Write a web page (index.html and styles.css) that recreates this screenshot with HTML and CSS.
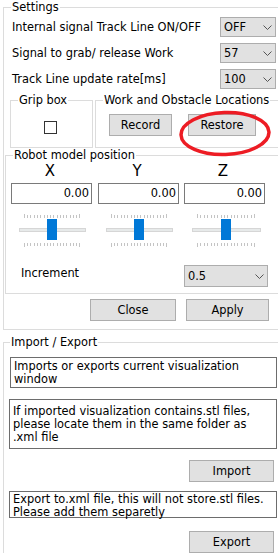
FILE: index.html
```html
<!DOCTYPE html>
<html lang="en">
<head>
    <meta charset="UTF-8">
    <title>Settings</title>
    <link rel="stylesheet" href="styles.css">
</head>
<body>
    <fieldset class="group settings">
        <legend>Settings</legend>
        <div class="setting-row">
            <span>Internal signal Track Line ON/OFF</span>
            <div class="combo combo-small">OFF<svg class="chevron" width="9" height="5" viewBox="0 0 9 5"><path d="M0.5 0.5 L4.5 4.5 L8.5 0.5" fill="none" stroke="#555" stroke-width="1"/></svg></div>
        </div>
        <div class="setting-row">
            <span>Signal to grab/ release Work</span>
            <div class="combo combo-small">57<svg class="chevron" width="9" height="5" viewBox="0 0 9 5"><path d="M0.5 0.5 L4.5 4.5 L8.5 0.5" fill="none" stroke="#555" stroke-width="1"/></svg></div>
        </div>
        <div class="setting-row">
            <span>Track Line update rate[ms]</span>
            <div class="combo combo-small">100<svg class="chevron" width="9" height="5" viewBox="0 0 9 5"><path d="M0.5 0.5 L4.5 4.5 L8.5 0.5" fill="none" stroke="#555" stroke-width="1"/></svg></div>
        </div>

        <div class="group-row">
            <fieldset class="group grip">
                <legend>Grip box</legend>
                <div class="checkbox"></div>
            </fieldset>
            <fieldset class="group locations">
                <legend>Work and Obstacle Locations</legend>
                <div class="location-buttons">
                    <button class="btn btn-record">Record</button>
                    <button class="btn btn-restore">Restore</button>
                </div>
                <!-- red marker drawn over the restore button -->
                <svg class="highlight" width="96" height="50" viewBox="0 0 96 50">
                    <ellipse cx="47" cy="24.5" rx="44" ry="21" fill="none" stroke="#ed1c24" stroke-width="3.5" transform="rotate(-2 47 24.5)"/>
                </svg>
            </fieldset>
        </div>

        <fieldset class="group robot">
            <legend>Robot model position</legend>
            <div class="axes">
                <div class="axis">
                    <div class="axis-name">X</div>
                    <div class="num-box">0.00</div>
                    <svg class="slider" width="81" height="33" viewBox="0 0 81 33">
                        <path d="M13.5 0v4M68.5 0v4M13.5 29v4M68.5 29v4" stroke="#c4c4c4"/>
                        <path d="M16.5 1v3M19.5 1v3M23.5 1v3M26.5 1v3M29.5 1v3M33.5 1v3M36.5 1v3M39.5 1v3M42.5 1v3M46.5 1v3M49.5 1v3M52.5 1v3M55.5 1v3M59.5 1v3M62.5 1v3M65.5 1v3M16.5 29v3M19.5 29v3M23.5 29v3M26.5 29v3M29.5 29v3M33.5 29v3M36.5 29v3M39.5 29v3M42.5 29v3M46.5 29v3M49.5 29v3M52.5 29v3M55.5 29v3M59.5 29v3M62.5 29v3M65.5 29v3" stroke="#c4c4c4"/>
                        <rect x="8.5" y="14.5" width="66" height="3" fill="#e7eaea" stroke="#d6d6d6"/>
                        <rect x="36" y="5" width="10" height="21" fill="#0078d7"/>
                    </svg>
                </div>
                <div class="axis">
                    <div class="axis-name">Y</div>
                    <div class="num-box">0.00</div>
                    <svg class="slider" width="81" height="33" viewBox="0 0 81 33">
                        <path d="M13.5 0v4M68.5 0v4M13.5 29v4M68.5 29v4" stroke="#c4c4c4"/>
                        <path d="M16.5 1v3M19.5 1v3M23.5 1v3M26.5 1v3M29.5 1v3M33.5 1v3M36.5 1v3M39.5 1v3M42.5 1v3M46.5 1v3M49.5 1v3M52.5 1v3M55.5 1v3M59.5 1v3M62.5 1v3M65.5 1v3M16.5 29v3M19.5 29v3M23.5 29v3M26.5 29v3M29.5 29v3M33.5 29v3M36.5 29v3M39.5 29v3M42.5 29v3M46.5 29v3M49.5 29v3M52.5 29v3M55.5 29v3M59.5 29v3M62.5 29v3M65.5 29v3" stroke="#c4c4c4"/>
                        <rect x="8.5" y="14.5" width="66" height="3" fill="#e7eaea" stroke="#d6d6d6"/>
                        <rect x="36" y="5" width="10" height="21" fill="#0078d7"/>
                    </svg>
                </div>
                <div class="axis">
                    <div class="axis-name">Z</div>
                    <div class="num-box">0.00</div>
                    <svg class="slider" width="81" height="33" viewBox="0 0 81 33">
                        <path d="M13.5 0v4M70.5 0v4M13.5 29v4M70.5 29v4" stroke="#c4c4c4"/>
                        <path d="M16.5 1v3M20.5 1v3M23.5 1v3M27.5 1v3M30.5 1v3M33.5 1v3M37.5 1v3M40.5 1v3M43.5 1v3M47.5 1v3M50.5 1v3M53.5 1v3M57.5 1v3M60.5 1v3M63.5 1v3M67.5 1v3M16.5 29v3M20.5 29v3M23.5 29v3M27.5 29v3M30.5 29v3M33.5 29v3M37.5 29v3M40.5 29v3M43.5 29v3M47.5 29v3M50.5 29v3M53.5 29v3M57.5 29v3M60.5 29v3M63.5 29v3M67.5 29v3" stroke="#c4c4c4"/>
                        <rect x="8.5" y="14.5" width="68" height="3" fill="#e7eaea" stroke="#d6d6d6"/>
                        <rect x="37" y="5" width="10" height="21" fill="#0078d7"/>
                    </svg>
                </div>
            </div>
            <div class="increment-row">
                <span>Increment</span>
                <div class="combo combo-wide">0.5<svg class="chevron" width="9" height="5" viewBox="0 0 9 5"><path d="M0.5 0.5 L4.5 4.5 L8.5 0.5" fill="none" stroke="#555" stroke-width="1"/></svg></div>
            </div>
        </fieldset>

        <div class="dialog-buttons">
            <button class="btn btn-close">Close</button>
            <button class="btn btn-apply">Apply</button>
        </div>
    </fieldset>

    <fieldset class="group import">
        <legend>Import / Export</legend>
        <div class="info info-1">Imports or exports current visualization window</div>
        <div class="info info-2">If imported visualization contains.stl files, please locate them in the same folder as .xml file</div>
        <button class="btn btn-side">Import</button>
        <div class="info info-3">Export to.xml file, this will not store.stl files. Please add them separetly</div>
        <button class="btn btn-side btn-export">Export</button>
    </fieldset>
</body>
</html>
```

FILE: styles.css
```css
body {
    margin: 0;
    width: 278px;
    height: 557px;
    overflow: hidden;
    background-color: #fff;
    font-family: "DejaVu Sans", sans-serif;
    font-size: 11.4px;
    color: #000;
}

.group {
    box-sizing: border-box;
    margin: 0;
    padding: 0;
    border: 1px solid #dcdcdc;
    min-width: 0;
}

.group legend {
    margin-left: 7px;
    padding: 0 1px;
    height: 14px;
    line-height: 14px;
    white-space: nowrap;
}

/* the right side of the outer boxes is cut off by the window */
.settings {
    margin-left: 3px;
    width: 275px;
    border-right: none;
    padding-bottom: 8px;
}

.setting-row {
    display: flex;
    align-items: center;
    justify-content: space-between;
    width: 264px;
    height: 20px;
    margin: 6px 0 0 8px;
}

.setting-row:first-of-type {
    margin-top: 3px;
}

.combo {
    box-sizing: border-box;
    display: flex;
    align-items: center;
    justify-content: space-between;
    background-color: #e1e1e1;
    border: 1px solid #adadad;
    padding: 0 3px 0 3px;
}

.combo-small {
    width: 56px;
    height: 20px;
}

.combo-wide {
    width: 84px;
    height: 22px;
}

.chevron {
    display: block;
}

.group-row {
    display: flex;
    margin: 4px 0 0 6px;
}

.grip {
    width: 83px;
}

.checkbox {
    box-sizing: border-box;
    width: 13px;
    height: 13px;
    border: 1px solid #333;
    margin: 14px 0 0 33px;
}

.locations {
    position: relative;
    flex: 1;
    margin-left: 2px;
    border-right: none;
    padding-bottom: 11px;
}

.location-buttons {
    display: flex;
    margin: 7px 0 0 13px;
}

.btn {
    box-sizing: border-box;
    height: 22px;
    padding: 0;
    background-color: #e1e1e1;
    border: 1px solid #adadad;
    font-family: inherit;
    font-size: 11.4px;
    color: #000;
}

.btn-record {
    width: 63px;
}

.btn-restore {
    width: 68px;
    margin-left: 16px;
}

.highlight {
    position: absolute;
    left: 82px;
    top: 2px;
}

.robot {
    margin-left: 1px;
    border-right: none;
    padding-bottom: 6px;
}

.axes {
    display: flex;
    gap: 6px;
    margin-left: 5px;
}

.axis {
    width: 81px;
}

.axis:last-child {
    margin-left: -1px;
}

.axis-name {
    height: 19px;
    line-height: 19px;
    font-size: 15px;
    text-align: center;
    padding-right: 3px;
}

.num-box {
    box-sizing: border-box;
    height: 21px;
    margin-top: 2px;
    border: 1px solid #7a7a7a;
    padding: 0 2px;
    line-height: 19px;
    text-align: right;
}

.slider {
    display: block;
    margin-top: 10px;
}

.increment-row {
    display: flex;
    align-items: flex-start;
    justify-content: space-between;
    width: 247px;
    margin: 18px 0 0 15px;
}

.increment-row span {
    margin-top: 1px;
}

.dialog-buttons {
    display: flex;
    margin: 5px 0 0 86px;
}

.btn-close {
    width: 86px;
}

.btn-apply {
    width: 83px;
    margin-left: 10px;
}

.import {
    margin: 5px 0 0 3px;
    width: 275px;
    border-right: none;
    border-bottom: none;
}

.import legend {
    margin-left: 6px;
}

.info {
    box-sizing: border-box;
    width: 268px;
    border: 1px solid #6d6d6d;
    line-height: 13px;
    padding: 2px 3px 0;
    margin-left: 5px;
}

.info-1 {
    width: 267px;
    height: 31px;
    margin: 8px 0 0 6px;
}

.info-2 {
    height: 50px;
    margin-top: 11px;
    padding-top: 5px;
}

.info-3 {
    height: 27px;
    margin-top: 9px;
    padding-top: 1px;
}

.btn-side {
    display: block;
    width: 85px;
    margin: 11px 0 0 185px;
}

.btn-export {
    margin-top: 13px;
}
```
